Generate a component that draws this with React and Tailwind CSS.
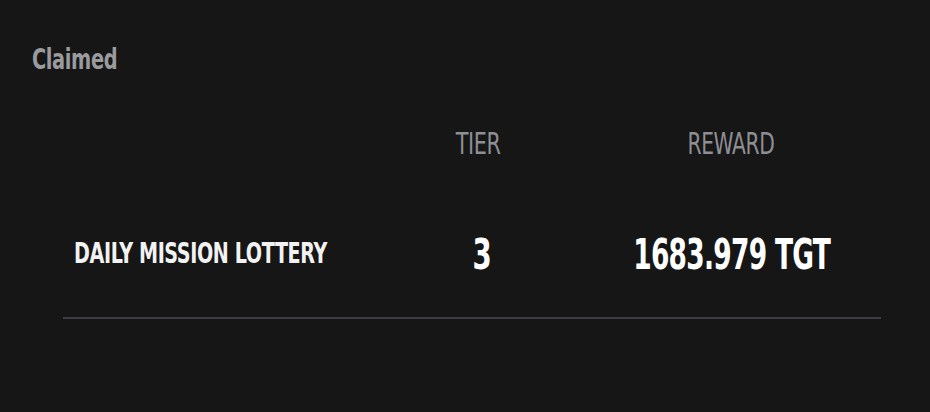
import React from 'react';

const rows = [{ name: 'DAILY MISSION LOTTERY', tier: 3, reward: '1683.979 TGT' }];

export default function App() {
  return (
    <div
      className="w-[930px] h-[412px] bg-[#161616] overflow-hidden whitespace-nowrap"
      style={{ fontFamily: '"DejaVu Sans Condensed", "Liberation Sans Narrow", "Liberation Sans", sans-serif' }}
    >
      <div className="pt-[44px] pl-[32px]">
        <h2 className="inline-block origin-left scale-x-[0.77] text-[28px] leading-[32px] font-bold text-[#9a9b9f] tracking-[-0.5px]">Claimed</h2>
      </div>
      <div className="ml-[63px] mt-[50px] w-[818px]">
        <div className="flex items-center h-[34px] text-[30px] text-[#8e8f94] tracking-[-0.5px]">
          <div className="w-[320px]" />
          <div className="w-[190px] text-center">
            <span className="inline-block scale-x-[0.77]">TIER</span>
          </div>
          <div className="w-[308px] text-center pl-[8px]">
            <span className="inline-block scale-x-[0.75]">REWARD</span>
          </div>
        </div>
        {rows.map(r => (
          <div key={r.name} className="flex items-center h-[137px] pt-[9px] mt-[22px] border-b-2 border-[#3a3c41]">
            <div className="w-[320px] pl-[11px]">
              <span className="inline-block origin-left scale-x-[0.76] text-[28px] font-bold text-[#f2f2f2] tracking-[-0.5px]">{r.name}</span>
            </div>
            <div className="w-[190px] text-center pl-[8px]">
              <span className="inline-block scale-x-[0.73] text-[42px] font-bold text-white">{r.tier}</span>
            </div>
            <div className="w-[308px] text-center pl-[10px]">
              <span className="inline-block scale-x-[0.7] text-[42px] font-bold text-white tracking-[-1px]">{r.reward}</span>
            </div>
          </div>
        ))}
      </div>
    </div>
  );
}
